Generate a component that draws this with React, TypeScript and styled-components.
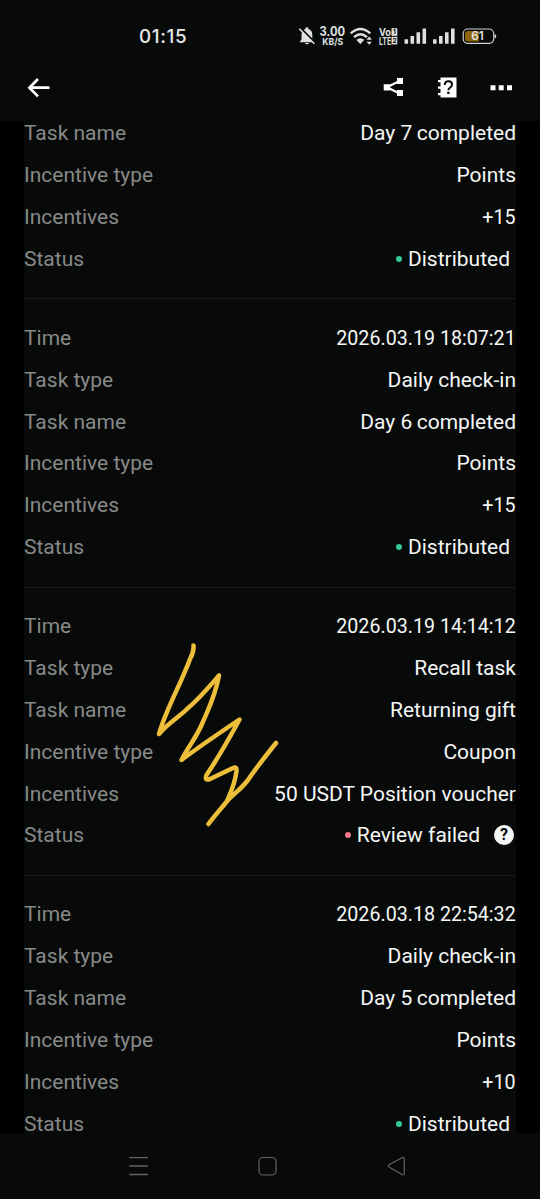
import React from "react";
import styled, { createGlobalStyle } from "styled-components";

const GlobalStyle = createGlobalStyle`
  * { box-sizing: border-box; }
  body { margin: 0; background: #000; }
`;

const Screen = styled.div`
  position: relative;
  display: flex;
  flex-direction: column;
  width: 540px;
  height: 1199px;
  overflow: hidden;
  background: #000;
  color: #f5f7f6;
  font-family: Roboto, "Liberation Sans", sans-serif;
`;

const StatusBar = styled.div`
  display: flex;
  flex: none;
  align-items: center;
  justify-content: space-between;
  height: 72px;
  padding: 0 44px 0 139px;
  background: #070a09;
`;

const Clock = styled.span`
  padding-top: 2px;
  font: 500 18.8px/24px Inter, sans-serif;
  letter-spacing: 0.65px;
  color: #e6e8e7;
`;

const StatusIcons = styled.svg`
  display: block;
  width: 200px;
  height: 30px;
  margin-right: -1px;
`;

const Toolbar = styled.header`
  display: flex;
  flex: none;
  align-items: center;
  justify-content: space-between;
  height: 49px;
  padding: 0 27px 18px 25px;
  background: #070a09;
`;

const Actions = styled.div`
  display: flex;
  gap: 30px;
`;

const IconButton = styled.button`
  display: flex;
  padding: 0;
  border: 0;
  background: none;
  color: #fff;
`;

const List = styled.main`
  flex: 1;
  min-height: 0;
  margin: 0 24px;
  overflow: hidden;
  background: #070a09;
`;

const Card = styled.section<{ $scrolled?: boolean }>`
  padding: ${(p) => (p.$scrolled ? 0 : "17.5px")} 0 18.4px;
  margin-top: ${(p) => (p.$scrolled ? "-8.6px" : 0)};
  border-bottom: 1px solid #181b1a;
`;

const Row = styled.div`
  display: flex;
  align-items: center;
  justify-content: space-between;
  height: 41.9px;
  font-size: 21px;
  line-height: 20px;
  white-space: nowrap;
`;

const Label = styled.span`
  color: #878988;
`;

const Value = styled.span`
  display: flex;
  align-items: center;
  white-space: pre;
`;

const Digits = styled.span`
  display: inline-block;
  transform: scaleX(0.936);
  transform-origin: right;
`;

const DayNumber = styled.span`
  letter-spacing: -0.8px;
`;

const Status = styled(Value)<{ $failed?: boolean }>`
  padding-right: ${(p) => (p.$failed ? "2px" : "6px")};
`;

const Dot = styled.i<{ $failed?: boolean }>`
  width: 6px;
  height: 6px;
  margin-right: 6px;
  border-radius: 50%;
  background: ${(p) => (p.$failed ? "#f57890" : "#36c795")};
`;

const Help = styled.span`
  display: flex;
  align-items: center;
  justify-content: center;
  width: 20px;
  height: 20px;
  margin-left: 14px;
  border-radius: 50%;
  background: #f5f7f6;
  color: #080a09;
  font: 700 16px/20px Roboto, sans-serif;
`;

const NavBar = styled.nav`
  display: flex;
  flex: none;
  align-items: center;
  justify-content: space-between;
  height: 66px;
  padding: 0 134px 0 128px;
  background: #070a09;
`;

const Scribble = styled.svg`
  position: absolute;
  left: 150px;
  top: 635px;
  width: 135px;
  height: 200px;
  pointer-events: none;
`;

type Entry = {
  time?: string;
  type?: string;
  name: string;
  kind: string;
  reward: string;
  failed?: boolean;
};

const entries: Entry[] = [
  { name: "Day 7 completed", kind: "Points", reward: "+15" },
  { time: "2026.03.19 18:07:21", type: "Daily check-in", name: "Day 6 completed", kind: "Points", reward: "+15" },
  { time: "2026.03.19 14:14:12", type: "Recall task", name: "Returning gift", kind: "Coupon", reward: "50 USDT Position voucher", failed: true },
  { time: "2026.03.18 22:54:32", type: "Daily check-in", name: "Day 5 completed", kind: "Points", reward: "+10" },
];

function formatValue(value: string) {
  if (/^[\d.:+ ]+$/.test(value)) return <Digits>{value}</Digits>;
  const day = value.match(/^(Day )(\d)(.*)$/);
  if (!day) return value;
  return (
    <span>
      {day[1]}
      <DayNumber>{day[2]}</DayNumber>
      {day[3]}
    </span>
  );
}

function Field({ label, value }: { label: string; value: string }) {
  return (
    <Row>
      <Label>{label}</Label>
      <Value>{formatValue(value)}</Value>
    </Row>
  );
}

function Record({ entry }: { entry: Entry }) {
  return (
    <Card $scrolled={!entry.time}>
      {entry.time && <Field label="Time" value={entry.time} />}
      {entry.type && <Field label="Task type" value={entry.type} />}
      <Field label="Task name" value={entry.name} />
      <Field label="Incentive type" value={entry.kind} />
      <Field label="Incentives" value={entry.reward} />
      <Row>
        <Label>Status</Label>
        <Status $failed={entry.failed}>
          <Dot $failed={entry.failed} />
          {entry.failed ? "Review failed" : "Distributed"}
          {entry.failed && <Help>?</Help>}
        </Status>
      </Row>
    </Card>
  );
}

function SystemIcons() {
  return (
    <StatusIcons viewBox="297 21 200 30" fill="#dfe1e0" fontFamily="Inter, sans-serif">
      <path d="M299.500 42.300 301.500 39.500v-4.500q0-5.200 4-6.100v-1.300h2.800v1.300q4 .9 4 6.100v4.500l2 2.800zM304.700 43h4.600q-2.300 2.600-4.600 0z" />
      <path d="m300.200 27.700 15 15" stroke="#070a09" strokeWidth="2" />
      <path d="m299.300 28.800 15 15" stroke="#dfe1e0" strokeWidth="1.600" />
      <text x="319.500" y="36" fontSize="12.500" fontWeight="700" textLength="25.500" lengthAdjust="spacingAndGlyphs">3.00</text>
      <text x="322.300" y="45" fontSize="9.500" fontWeight="700" textLength="21" lengthAdjust="spacingAndGlyphs">KB/S</text>
      <g fill="none" stroke="#dfe1e0" strokeWidth="2.400">
        <path d="M350.700 33.400q9.800-8.800 19.600 0M354 37.200q6.500-5.800 13 0M357.200 40.700q3.300-2.600 6.300 0" />
      </g>
      <path d="m357.800 41.300 2.500 3 2.500-3q-2.500-2-5 0zM366.500 39.800l2.700-3.200 2.700 3.200zM366.500 41.800l2.700 3 2.700-3z" />
      <text x="379" y="35.600" fontSize="9.800" fontWeight="700" textLength="12" lengthAdjust="spacingAndGlyphs">Vo</text>
      <text x="379" y="44.500" fontSize="9.800" fontWeight="700" textLength="12.200" lengthAdjust="spacingAndGlyphs">LTE</text>
      <rect x="391.500" y="28.200" width="5.800" height="7.600" />
      <rect x="391.500" y="36.800" width="5.800" height="7.600" />
      <g fill="#070a09" fontSize="6.500" fontWeight="700">
        <text x="393" y="34.400">1</text>
        <text x="392.500" y="43">2</text>
      </g>
      {[404.500, 433].map((x) => (
        <g key={x}>
          <rect x={x} y="39.200" width="3.600" height="4.600" rx=".5" />
          <rect x={x + 6} y="36" width="3.600" height="7.800" rx=".5" />
          <rect x={x + 12} y="32.300" width="3.600" height="11.500" rx=".5" />
          <rect x={x + 18} y="28.500" width="3.600" height="15.300" rx=".5" />
        </g>
      ))}
      <rect x="463.200" y="29" width="30.500" height="14.300" rx="4.500" fill="none" stroke="#d0d2d1" strokeWidth="1.200" />
      <path d="M468 31h10.800v10.400H468q-3 0-3-3V34q0-3 3-3z" fill="#916507" />
      <path d="M494.700 34q1.500.5 1.500 2.200t-1.500 2.200z" />
      <text x="471.300" y="40.400" fontSize="11.800" fontWeight="600" textLength="12.500" lengthAdjust="spacingAndGlyphs">61</text>
    </StatusIcons>
  );
}

export default function App() {
  return (
    <Screen>
      <GlobalStyle />
      <StatusBar>
        <Clock>01:15</Clock>
        <SystemIcons />
      </StatusBar>
      <Toolbar>
        <IconButton aria-label="Back">
          <svg width="26" height="24" viewBox="25 76 26 24" fill="none" stroke="currentColor" strokeWidth="2.700">
            <path d="M49.500 87.700H29M38 79l-8.600 8.700L38 96.400" />
          </svg>
        </IconButton>
        <Actions>
          <IconButton aria-label="Share">
            <svg width="24" height="24" viewBox="381 76 24 24" fill="currentColor">
              <path d="M399 81.300 387 87.300l12 6" fill="none" stroke="currentColor" strokeWidth="2.200" />
              <path d="M383.700 84.200h6.200v6.200h-6.200zM397 78h6v6h-6zM397 90h6v6h-6z" />
            </svg>
          </IconButton>
          <IconButton aria-label="Guide">
            <svg width="24" height="24" viewBox="435 76 24 24" fill="currentColor">
              <path d="M440.500 77.500h16v20h-16v-2.300H438v-2.300h2.500v-4.200H438v-2.300h2.500v-4.200H438v-2.300h2.500z" />
              <path d="M444.700 85q.1-3.700 3.700-3.700t3.600 3.200q0 1.700-1.900 3-1.700 1.200-1.700 2.700" fill="none" stroke="#070a09" strokeWidth="2" />
              <path d="M447.200 91.700h2.300V94h-2.300z" fill="#070a09" />
            </svg>
          </IconButton>
          <IconButton aria-label="More">
            <svg width="24" height="24" viewBox="489 76 24 24" fill="currentColor">
              <path d="M490.500 85.200h5v5h-5zM498.700 85.200h5v5h-5zM507 85.200h5v5h-5z" />
            </svg>
          </IconButton>
        </Actions>
      </Toolbar>
      <List>
        {entries.map((entry) => (
          <Record key={entry.name} entry={entry} />
        ))}
      </List>
      <NavBar>
        <svg width="22" height="22" viewBox="128 1155 22 22" stroke="#626564" strokeWidth="1.300">
          <path d="M129.300 1157.700h18.500M129.300 1166h18.500M129.300 1174.500h18.500" />
        </svg>
        <svg width="22" height="22" viewBox="256 1155 22 22" fill="none" stroke="#626564" strokeWidth="1.200">
          <rect x="259" y="1157.500" width="17" height="17.500" rx="4" />
        </svg>
        <svg width="22" height="22" viewBox="384 1155 22 22" fill="none" stroke="#626564" strokeWidth="1.200">
          <path d="M389 1164.800 402 1157.800q2.300-1 2.300 1V1173.500q0 2-2.300 1L389 1167q-1.400-1 0-2.200z" />
        </svg>
      </NavBar>
      <Scribble viewBox="150 635 135 200" fill="none" stroke="#ecbe3a" strokeWidth="4.500" strokeLinecap="round" strokeLinejoin="round">
        <path d="M193.500 645.500Q194 652 190 659C181 684 166 709 159 734C169 722 178 718 187 709C199 699 209 687 219 675.500C215 697 208 710 202 724C196 738 188 747 181.500 760C196 749 209 740 239.500 719.500C230 737 218 758 206.500 775Q204 781 210 779L233 768Q237 766 236.500 771C235 784 231 792 227 801C221 809 216 814 208.500 824C215 815 220 810 228 800C236 792 241 789 248 780C256 768 264 758 276 743" />
      </Scribble>
    </Screen>
  );
}
